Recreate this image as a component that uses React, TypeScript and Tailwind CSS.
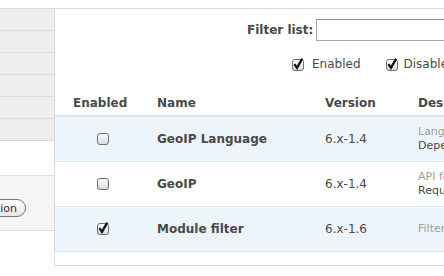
import React from 'react';

const font = { fontFamily: '"DejaVu Sans", Verdana, sans-serif' };

const Box = ({ checked }: { checked?: boolean }) => (
  <svg width="12" height="13" viewBox="0 0 12 13" className="shrink-0">
    <defs>
      <linearGradient id="cbg" x1="0" y1="0" x2="0" y2="1">
        <stop offset="0" stopColor="#ffffff" />
        <stop offset="1" stopColor="#d9d9d9" />
      </linearGradient>
    </defs>
    <rect x="0.5" y="1.5" width="11" height="11" rx="2.5" fill="url(#cbg)" stroke="#707070" />
    {checked && <path d="M2.4 6.2 L5 9.8 L10.2 0.6" fill="none" stroke="#111" strokeWidth="2.3" />}
  </svg>
);

const modules = [
  { name: 'GeoIP Language', version: '6.x-1.4', desc: 'Language negotiation by GeoIP', req: 'Depends on: GeoIP', checked: false, odd: true },
  { name: 'GeoIP', version: '6.x-1.4', desc: 'API for GeoIP lookups', req: 'Required by: GeoIP Language', checked: false, odd: false },
  { name: 'Module filter', version: '6.x-1.6', desc: 'Filter the modules list.', req: '', checked: true, odd: true },
];

export default function App() {
  return (
    <div className="w-[444px] h-[276px] overflow-hidden bg-white text-[#494949]" style={font}>
      <div className="mt-[8px] border-t border-[#d6dbdb] flex">
        {/* sidebar */}
        <div className="w-[54px] shrink-0">
          {[0, 1, 2, 3, 4, 5].map((i) => (
            <div key={i} className="h-[22px] bg-[#eeeeee] border-b border-[#d6dbdb]" />
          ))}
          <div className="mt-[34px] h-[56px] bg-[#f5f5f5] border-y border-[#dcdcdc] flex justify-end items-center pt-[10px] pr-[28px]">
            <button className="shrink-0 whitespace-nowrap h-[18px] pl-[6px] pr-[8px] rounded-full border border-[#777] bg-gradient-to-b from-white to-[#e6e6e6] text-[11px] leading-none text-[#333]">
              Save configuration
            </button>
          </div>
        </div>

        {/* main panel */}
        <div className="w-[440px] shrink-0 border-l border-b border-[#d6dbdb] h-[257px]">
          <div className="flex items-center pl-[192px] pt-[10px] gap-[3px]">
            <span className="font-bold text-[12px] whitespace-nowrap">Filter list:</span>
            <div className="h-[22px] w-[180px] shrink-0 border border-[#a9a9a9] border-t-[#8e8e8e] bg-white" />
          </div>
          <div className="flex items-center pl-[237px] pt-[14px] text-[12px] whitespace-nowrap">
            <Box checked />
            <span className="ml-[8px]">Enabled</span>
            <span className="ml-[25px]"><Box checked /></span>
            <span className="ml-[6px]">Disabled</span>
          </div>

          <div className="mt-[17px] flex items-center h-[27px] border-b-2 border-[#d3e7f4] text-[12px] font-bold whitespace-nowrap">
            <div className="w-[102px] shrink-0 pl-[18px]">Enabled</div>
            <div className="w-[168px] shrink-0">Name</div>
            <div className="w-[93px] shrink-0">Version</div>
            <div className="shrink-0">Description</div>
          </div>

          {modules.map((m) => (
            <div
              key={m.name}
              className={`flex items-center h-[45px] border-b border-[#d3e7f4] whitespace-nowrap ${m.odd ? 'bg-[#edf5fa]' : 'bg-white'}`}
            >
              <div className="w-[102px] shrink-0 pl-[42px] pb-[1px] flex">
                <Box checked={m.checked} />
              </div>
              <div className="w-[168px] shrink-0 font-bold text-[12px]">{m.name}</div>
              <div className="w-[93px] shrink-0 text-[12px]">{m.version}</div>
              <div className="shrink-0 text-[11px] leading-[14px]">
                <div className="text-[#a0a0a0]">{m.desc}</div>
                {m.req && <div className="text-[#494949]">{m.req}</div>}
              </div>
            </div>
          ))}
        </div>
      </div>
    </div>
  );
}
